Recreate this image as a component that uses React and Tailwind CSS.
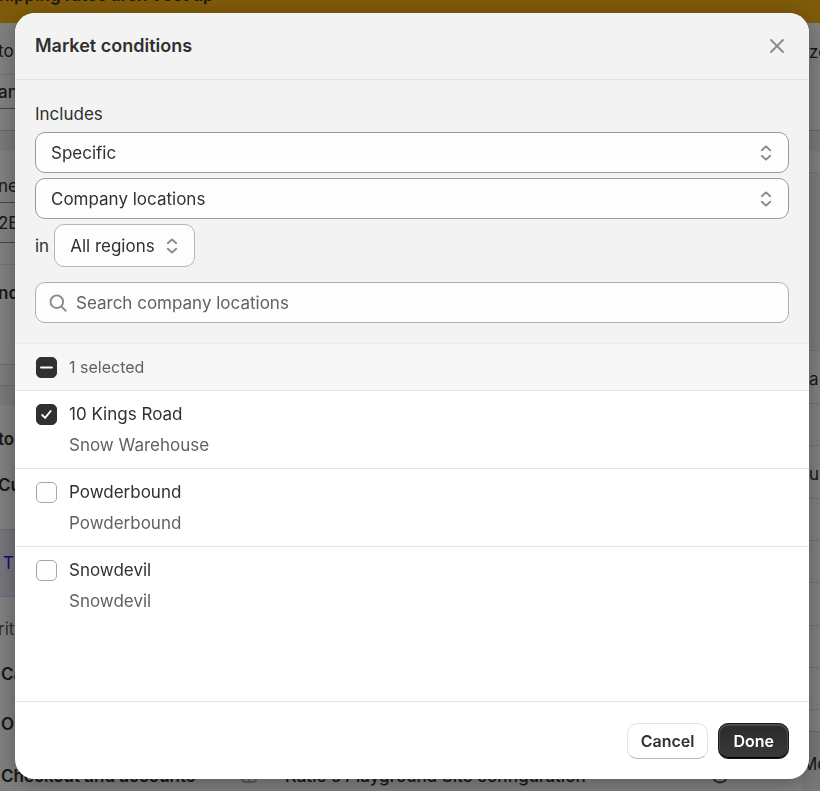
import React, { useEffect, useRef, useState } from "react";

const locations = [
  { id: 1, name: "10 Kings Road", company: "Snow Warehouse" },
  { id: 2, name: "Powderbound", company: "Powderbound" },
  { id: 3, name: "Snowdevil", company: "Snowdevil" },
];

const SelectIcon = () => (
  <svg
    viewBox="0 0 12 16"
    className="pointer-events-none absolute top-1/2 right-[17px] h-4 w-3 -translate-y-1/2"
    fill="none"
    stroke="#8a8a8a"
    strokeWidth="1.9"
    strokeLinecap="round"
    strokeLinejoin="round"
  >
    <path d="M1.8 5.2 6 1.4l4.2 3.8M1.8 10.8 6 14.6l4.2-3.8" />
  </svg>
);

const Select = ({ label, options, className }) => (
  <div className="relative">
    <select
      aria-label={label}
      className={`appearance-none border bg-[#fdfdfd] text-[17px] leading-6 text-[#303030] ${className}`}
    >
      {options.map((option) => (
        <option key={option}>{option}</option>
      ))}
    </select>
    <SelectIcon />
  </div>
);

const Checkbox = ({ id, checked, mixed, onChange, label }) => {
  const ref = useRef(null);

  useEffect(() => {
    ref.current.indeterminate = Boolean(mixed);
  }, [mixed]);

  return (
    <span className="grid h-6 w-[21px] shrink-0 items-center">
      <input
        ref={ref}
        id={id}
        type="checkbox"
        aria-label={label}
        checked={checked}
        onChange={onChange}
        className="col-start-1 row-start-1 h-[21px] w-[21px] appearance-none rounded-[5px] border border-[#a6a6a6] bg-[#fdfdfd] checked:border-[#303030] checked:bg-[#303030] indeterminate:border-[#303030] indeterminate:bg-[#303030]"
      />
      {(checked || mixed) && (
        <svg
          viewBox="0 0 21 21"
          className="pointer-events-none col-start-1 row-start-1 h-[21px] w-[21px]"
          fill="none"
          stroke="#fff"
          strokeWidth="1.9"
          strokeLinecap="round"
          strokeLinejoin="round"
        >
          {mixed ? <path d="M5 10.5h11" /> : <path d="m6.2 11 2.9 2.9 5.6-6.9" />}
        </svg>
      )}
    </span>
  );
};

const Row = ({ className, children }) => (
  <div className={`flex shrink-0 overflow-hidden whitespace-nowrap ${className}`}>
    {children}
  </div>
);

// Settings page that stays visible around the dialog
const SettingsPage = () => (
  <div
    aria-hidden="true"
    className="flex h-screen flex-col overflow-hidden bg-[#f1f1f1] text-[17px] leading-6 text-[#303030]"
  >
    <div className="-mt-[17px] h-10 shrink-0 bg-[#ffb412] font-semibold">
      <p className="-ml-3">Shipping rates aren't set up</p>
    </div>
    <div className="flex flex-1">
      <div className="-ml-0.5 flex min-w-0 flex-1 flex-col">
        <Row className="h-[52px] items-center border-b border-[#e3e3e3] bg-white pt-1">to</Row>
        <Row className="h-[34px] items-center border-b border-[#8a8a8a] bg-white font-medium">an</Row>
        <Row className="h-[22px] border-b border-[#cccccc] bg-white" />
        <Row className="mt-5 h-[52px] items-end border-b border-[#8a8a8a] bg-white pb-1">ne</Row>
        <Row className="h-10 items-center border-b border-[#8a8a8a] bg-white">2B</Row>
        <Row className="h-[22px] border-b border-[#e3e3e3] bg-white" />
        <Row className="h-[99px] bg-white pt-4 font-semibold">nc</Row>
        <Row className="h-[22px] border-y border-[#d4d4d4] bg-[#f7f7f7]" />
        <Row className="mt-[19px] h-[124px] flex-col gap-[22px] bg-white pt-[22px] font-semibold">
          <span>to</span>
          <span>Cu</span>
        </Row>
        <Row className="h-[68px] items-center border-y border-[#d9d4ec] bg-[#ebe8f7] pl-[5px] text-[#5700d1]">T</Row>
        <Row className="h-[59px] items-center bg-white pt-1 text-[#616161]">rit</Row>
        <Row className="h-9 items-center bg-white pl-[3px] font-semibold">Ca</Row>
        <Row className="h-16 items-center bg-white pl-[3px] font-semibold">O</Row>
        <Row className="flex-1 items-start bg-white pt-2 pl-[3px]">
          <span className="w-60 font-semibold">Checkout and accounts</span>
          <svg viewBox="0 0 16 20" className="h-5 w-4" fill="none" stroke="#b5b5b5" strokeWidth="1.8">
            <rect x="1" y="4" width="14" height="14" rx="3" />
            <path d="M8 4v14" />
          </svg>
          <span className="flex-1 pl-7 font-medium">Katie's Playground Site configuration</span>
          <svg viewBox="0 0 18 20" className="mr-[73px] h-5 w-[18px]" fill="none" stroke="#4a4a4a" strokeWidth="1.8">
            <circle cx="9" cy="11" r="7.5" />
            <path d="M9 7v8" />
          </svg>
        </Row>
      </div>
      <div className="flex w-[18px] shrink-0 flex-col">
        <Row className="h-[108px] border-b border-[#cccccc] bg-white pt-[17px] pl-[7px]">ze</Row>
        <Row className="mt-5 h-[22px] border-b border-[#e3e3e3] bg-white" />
        <Row className="h-[178px] border-b border-[#e3e3e3] bg-[#f7f7f7]" />
        <Row className="h-[53px] items-center border-b border-[#e3e3e3] bg-white pt-1 pl-[7px]">a</Row>
        <Row className="h-[42px] border-b border-[#e3e3e3] bg-white" />
        <Row className="h-[53px] items-center border-b border-[#e3e3e3] bg-white pt-1 pl-[7px]">u</Row>
        <Row className="h-[42px] border-b border-[#e3e3e3] bg-white" />
        <Row className="h-[42px] border-b border-[#e3e3e3] bg-white" />
        <Row className="h-[43px] border-b border-[#e3e3e3] bg-white" />
        <Row className="h-[42px] border-b border-[#e3e3e3] bg-white" />
        <Row className="h-[42px] border-b border-[#e3e3e3] bg-white" />
        <Row className="h-[22px] border-b border-[#cccccc] bg-white" />
        <Row className="flex-1 pt-5">Mo</Row>
      </div>
    </div>
  </div>
);

const MarketConditions = () => {
  const [selected, setSelected] = useState([1]);
  const [search, setSearch] = useState("");

  const toggle = (id) =>
    setSelected(
      selected.includes(id) ? selected.filter((s) => s !== id) : [...selected, id]
    );

  const toggleAll = () =>
    setSelected(selected.length === locations.length ? [] : locations.map((l) => l.id));

  const visible = locations.filter((l) =>
    l.name.toLowerCase().includes(search.toLowerCase())
  );

  return (
    <div
      role="dialog"
      aria-labelledby="dialog-title"
      className="flex flex-1 flex-col overflow-hidden rounded-[20px] bg-white text-[17px] leading-6 text-[#303030] shadow-[0_4px_20px_rgba(0,0,0,0.3)]"
    >
      <header className="flex items-center justify-between border-b border-[#e3e3e3] bg-[#f3f3f3] px-5 py-[21px]">
        <h2 id="dialog-title" className="text-lg leading-6 font-semibold">Market conditions</h2>
        <button type="button" aria-label="Close" className="p-1">
          <svg viewBox="0 0 16 16" className="h-4 w-4" fill="none" stroke="#8a8a8a" strokeWidth="1.8" strokeLinecap="round">
            <path d="m2 2 12 12M14 2 2 14" />
          </svg>
        </button>
      </header>

      <div className="border-b border-[#ebebeb] bg-[#f3f3f3] px-5 pt-[22px] pb-5">
        <p>Includes</p>
        <div className="mt-[6px] flex flex-col gap-[5px]">
          <Select
            label="Includes"
            options={["Specific", "All"]}
            className="h-[41px] w-full rounded-[10px] border-[#9a9a9a] px-[15px]"
          />
          <Select
            label="Condition type"
            options={["Company locations", "Regions"]}
            className="h-[41px] w-full rounded-[10px] border-[#9a9a9a] px-[15px]"
          />
          <div className="flex items-center gap-[5px]">
            <span>in</span>
            <Select
              label="Regions"
              options={["All regions"]}
              className="h-[43px] w-[141px] rounded-[10px] border-[#b5b5b5] px-[15px]"
            />
          </div>
        </div>
        <label className="mt-[15px] flex h-[41px] items-center gap-2 rounded-[10px] border border-[#b0b0b0] bg-[#fdfdfd] px-3">
          <svg viewBox="0 0 20 20" className="h-5 w-5 shrink-0" fill="none" stroke="#8a8a8a" strokeWidth="1.9" strokeLinecap="round">
            <circle cx="8.8" cy="8.7" r="6.3" />
            <path d="m13.5 13.6 4.2 4.1" />
          </svg>
          <input
            type="text"
            aria-label="Search company locations"
            placeholder="Search company locations"
            value={search}
            onChange={(e) => setSearch(e.target.value)}
            className="min-w-0 flex-1 bg-transparent outline-none placeholder:text-[#616161]"
          />
        </label>
      </div>

      <div className="flex items-center gap-3 border-b border-[#e3e3e3] bg-[#f7f7f7] px-[21px] py-[11px] text-base text-[#616161]">
        <Checkbox
          id="select-all"
          checked={selected.length === locations.length}
          mixed={selected.length > 0 && selected.length < locations.length}
          onChange={toggleAll}
        />
        <label htmlFor="select-all">{selected.length} selected</label>
      </div>

      <ul className="flex-1">
        {visible.map((location, index) => (
          <li
            key={location.id}
            className={`flex gap-3 px-[21px] py-[11px] ${
              index < visible.length - 1 ? "border-b border-[#e3e3e3]" : ""
            }`}
          >
            <Checkbox
              id={`location-${location.id}`}
              checked={selected.includes(location.id)}
              onChange={() => toggle(location.id)}
            />
            <label htmlFor={`location-${location.id}`} className="flex flex-col gap-[7px]">
              <span>{location.name}</span>
              <span className="text-[#616161]">{location.company}</span>
            </label>
          </li>
        ))}
      </ul>

      <footer className="flex justify-end gap-[10px] border-t border-[#e3e3e3] px-5 pt-[21px] pb-5 text-base font-semibold">
        <button
          type="button"
          className="h-9 rounded-[10px] border border-[#e3e3e3] border-b-[#b5b5b5] bg-white px-[13px]"
        >
          Cancel
        </button>
        <button
          type="button"
          className="h-9 rounded-[10px] border border-[#1a1a1a] bg-linear-to-b from-[#2b2b2b] to-[#383838] px-[14px] text-white shadow-[inset_0_1px_0_1px_#4c4c4c,inset_0_-1px_0_#000]"
        >
          Done
        </button>
      </footer>
    </div>
  );
};

export default function App() {
  return (
    <div className="font-[Inter,sans-serif]">
      <SettingsPage />
      <div className="fixed inset-0 flex bg-black/50 pt-[13px] pr-[11px] pb-3 pl-[15px]">
        <MarketConditions />
      </div>
    </div>
  );
}
